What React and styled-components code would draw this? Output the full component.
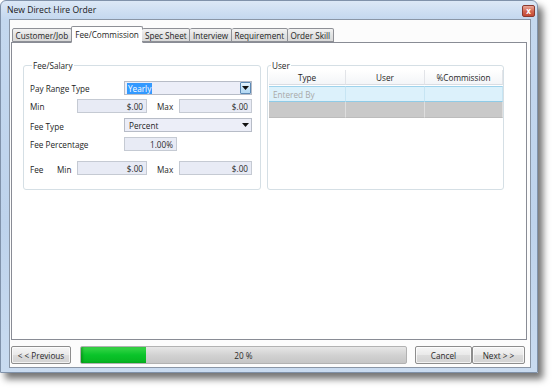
import React from 'react';
import styled, { createGlobalStyle } from 'styled-components';

const GlobalStyle = createGlobalStyle`
	html, body {
		margin: 0;
		padding: 0;
		background: #fff;
	}
	body {
		font-family: "Open Sans", "Liberation Sans", sans-serif;
		font-size: 8.2px;
		color: #1e1e1e;
	}
`;

const Desktop = styled.div`
	width: 555px;
	height: 390px;
	overflow: hidden;
	background: #fff;
`;

const Window = styled.div`
	width: 538px;
	height: 373px;
	box-sizing: border-box;
	display: flex;
	flex-direction: column;
	border: 1px solid #8092aa;
	border-radius: 6px 6px 0 0;
	background: linear-gradient(to bottom, #dce8f6 0, #c4d8ef 18px, #bed3ec 60%, #c9dbf0 100%);
	box-shadow: 5px 6px 7px rgba(0, 0, 0, 0.55);
	padding: 0 6px 4px 8px;
`;

const TitleBar = styled.div`
	height: 18px;
	display: flex;
	align-items: center;
	justify-content: space-between;
`;

const Title = styled.span`
	font-size: 8.6px;
	color: #1a1a1a;
	margin-left: -2px;
`;

const CloseButton = styled.div`
	width: 13px;
	height: 12px;
	margin-right: -4px;
	margin-top: 2px;
	box-sizing: border-box;
	border: 1px solid #8a3a30;
	border-radius: 2px;
	background: linear-gradient(to bottom, #e9a99a, #d3644f 55%, #c44a35);
	display: flex;
	align-items: center;
	justify-content: center;
	color: #fff;
	font-size: 8px;
	font-weight: bold;
	line-height: 1;
`;

const Client = styled.div`
	flex: 1;
	display: flex;
	flex-direction: column;
	border: 1px solid #8a96a6;
	background: #fcfcfc;
	padding: 5px 3px 3px 1px;
`;

const TabStrip = styled.div`
	display: flex;
	align-items: flex-end;
	height: 17px;
	padding-left: 1px;
	position: relative;
	z-index: 1;
`;

const Tab = styled.div`
	box-sizing: border-box;
	height: ${p => (p.$active ? '17px' : '14px')};
	margin: ${p => (p.$active ? '0 -1px -1px -1px' : '0')};
	padding: 0 ${p => (p.$active ? '3.5px' : '2.6px')};
	border: 1px solid #8e9096;
	border-bottom: ${p => (p.$active ? '1px solid #fff' : '1px solid #8e9096')};
	border-left-width: ${p => (p.$first || p.$active ? '1px' : '0')};
	border-radius: 2px 2px 0 0;
	background: ${p => (p.$active ? '#fff' : 'linear-gradient(to bottom, #f3f3f3, #e3e3e3 50%, #d9d9d9)')};
	display: flex;
	align-items: center;
	white-space: nowrap;
	font-size: 8.2px;
	color: #1e1e1e;
`;

const Panel = styled.div`
	flex: 1;
	border: 1px solid #898c95;
	background: #fff;
	padding: 17px 21px 0 11px;
	display: flex;
	gap: 6px;
	align-items: flex-start;
`;

const GroupBox = styled.fieldset`
	margin: 0;
	width: ${p => p.$width}px;
	height: 130px;
	box-sizing: border-box;
	border: 1px solid #d5dfe5;
	border-radius: 3px;
	padding: ${p => p.$padding};
	min-width: 0;
`;

const Legend = styled.legend`
	padding: 0 1px;
	margin-left: 2px;
	line-height: 11px;
	color: #1e1e1e;
`;

const Form = styled.div`
	display: flex;
	flex-direction: column;
	padding-top: 10px;
`;

const Row = styled.div`
	display: flex;
	align-items: center;
	height: 14px;
	margin-top: ${p => p.$gap || 0}px;
`;

const Label = styled.span`
	width: ${p => p.$width}px;
	margin-left: ${p => p.$offset || 0}px;
	flex: none;
	white-space: nowrap;
	padding-top: ${p => (p.$low ? 3 : 0)}px;
`;

const Field = styled.div`
	width: ${p => p.$width}px;
	height: 14px;
	box-sizing: border-box;
	flex: none;
	border: 1px solid #c5cad3;
	background: #e8ebf5;
	display: flex;
	align-items: center;
	justify-content: flex-end;
	padding-right: 3px;
	color: #2a2a2a;
`;

const Combo = styled.div`
	width: 128px;
	height: 14px;
	box-sizing: border-box;
	flex: none;
	border: 1px solid #b7bcc7;
	background: #eceef8;
	display: flex;
	align-items: center;
	padding-left: 2px;
	position: relative;
`;

const Selected = styled.span`
	background: #3399ff;
	color: #fff;
	padding: 0 1px;
	line-height: 11px;
`;

const ComboText = styled.span`
	flex: 1;
	padding-left: 2px;
`;

const DropButton = styled.div`
	position: absolute;
	right: 0;
	top: 0;
	bottom: 0;
	width: ${p => (p.$boxed ? 11 : 12)}px;
	box-sizing: border-box;
	border: ${p => (p.$boxed ? '1px solid #5d8ab5' : 'none')};
	border-radius: 1px;
	background: ${p => (p.$boxed ? 'linear-gradient(to bottom, #e5f3fc, #c5e3f7 50%, #b3d8f3)' : 'transparent')};
	display: flex;
	align-items: center;
	justify-content: center;
`;

const Grid = styled.div`
	display: grid;
	grid-template-columns: 77px 79px 78px;
	grid-auto-rows: 16px;
	margin-top: -1px;
`;

const HeadCell = styled.div`
	height: 15px;
	display: flex;
	align-items: center;
	justify-content: center;
	background: linear-gradient(to bottom, #ffffff, #f3f5f8);
	border-right: 1px solid #e2e4e8;
	border-bottom: 1px solid #d9dde3;
	box-sizing: border-box;
	&:last-child {
		border-right: none;
	}
`;

const Cell = styled.div`
	display: flex;
	align-items: center;
	box-sizing: border-box;
	padding-left: 4px;
	color: #a8a8a8;
	background: ${p => (p.$current ? '#dcf1fb' : '#c9c9c9')};
	border-top: ${p => (p.$current ? '1px solid #9fd3ec' : 'none')};
	border-bottom: ${p => (p.$current ? '1px solid #8fcbe7' : '1px solid #bcbcbc')};
	border-right: 1px solid ${p => (p.$current ? '#c7e5f3' : '#dedede')};
`;

const BottomBar = styled.div`
	height: 18px;
	margin-top: 6px;
	padding-right: 2px;
	display: flex;
	align-items: stretch;
`;

const Button = styled.div`
	width: ${p => p.$width}px;
	box-sizing: border-box;
	border: 1px solid #8d8d8d;
	border-radius: 2px;
	background: linear-gradient(to bottom, #f6f6f6, #e9e9e9 50%, #dcdcdc 51%, #d2d2d2);
	display: flex;
	align-items: center;
	justify-content: center;
	color: #2a2a2a;
	box-shadow: inset 0 0 0 1px rgba(255, 255, 255, 0.7);
`;

const Progress = styled.div`
	flex: 1;
	margin: 0 8px 0 9px;
	box-sizing: border-box;
	border: 1px solid #b2b2b2;
	border-radius: 2px;
	background: linear-gradient(to bottom, #e6e6e6, #d2d2d2 50%, #c6c6c6);
	position: relative;
	display: flex;
	align-items: center;
	justify-content: center;
	overflow: hidden;
`;

const ProgressFill = styled.div`
	position: absolute;
	left: 0;
	top: 0;
	bottom: 0;
	background: linear-gradient(to bottom, #3bd64a, #0ac42a 50%, #06b320);
	box-shadow: inset 2px 0 2px rgba(0, 80, 0, 0.3);
`;

const ProgressText = styled.span`
	position: relative;
	color: #2a2a2a;
`;

const Arrow = () => (
	<svg width="7" height="4" viewBox="0 0 7 4">
		<path d="M0 0h7L3.5 4z" fill="#111" />
	</svg>
);

const tabs = ['Customer/Job', 'Fee/Commission', 'Spec Sheet', 'Interview', 'Requirement', 'Order Skill'];

export default function App() {
	const percent = 20;
	return (
		<Desktop>
			<GlobalStyle />
			<Window>
				<TitleBar>
					<Title>New Direct Hire Order</Title>
					<CloseButton>x</CloseButton>
				</TitleBar>
				<Client>
					<TabStrip>
						{tabs.map((t, i) => (
							<Tab key={t} $first={i === 0} $active={i === 1}>
								{t}
							</Tab>
						))}
					</TabStrip>
					<Panel>
						<GroupBox $width={238} $padding="0 0 0 6px">
							<Legend>Fee/Salary</Legend>
							<Form>
								<Row>
									<Label $width={94}>Pay Range Type</Label>
									<Combo>
										<Selected>Yearly</Selected>
										<DropButton $boxed>
											<Arrow />
										</DropButton>
									</Combo>
								</Row>
								<Row $gap={4}>
									<Label $width={47}>Min</Label>
									<Field $width={70}>$.00</Field>
									<Label $width={22} $offset={10}>Max</Label>
									<Field $width={73}>$.00</Field>
								</Row>
								<Row $gap={5}>
									<Label $width={94} $low>Fee Type</Label>
									<Combo>
										<ComboText>Percent</ComboText>
										<DropButton>
											<Arrow />
										</DropButton>
									</Combo>
								</Row>
								<Row $gap={5}>
									<Label $width={94}>Fee Percentage</Label>
									<Field $width={53}>1.00%</Field>
								</Row>
								<Row $gap={10}>
									<Label $width={27} $low>Fee</Label>
									<Label $width={20} $low>Min</Label>
									<Field $width={70}>$.00</Field>
									<Label $width={22} $offset={10} $low>Max</Label>
									<Field $width={73}>$.00</Field>
								</Row>
							</Form>
						</GroupBox>
						<GroupBox $width={237} $padding="0 1px">
							<Legend>User</Legend>
							<Grid>
								<HeadCell>Type</HeadCell>
								<HeadCell>User</HeadCell>
								<HeadCell>%Commission</HeadCell>
								<Cell $current>Entered By</Cell>
								<Cell $current />
								<Cell $current />
								<Cell />
								<Cell />
								<Cell />
							</Grid>
						</GroupBox>
					</Panel>
					<BottomBar>
						<Button $width={60}>&lt; &lt; Previous</Button>
						<Progress>
							<ProgressFill style={{ width: `${percent}%` }} />
							<ProgressText>{percent} %</ProgressText>
						</Progress>
						<Button $width={57}>Cancel</Button>
						<Button $width={53}>Next &gt; &gt;</Button>
					</BottomBar>
				</Client>
			</Window>
		</Desktop>
	);
}
